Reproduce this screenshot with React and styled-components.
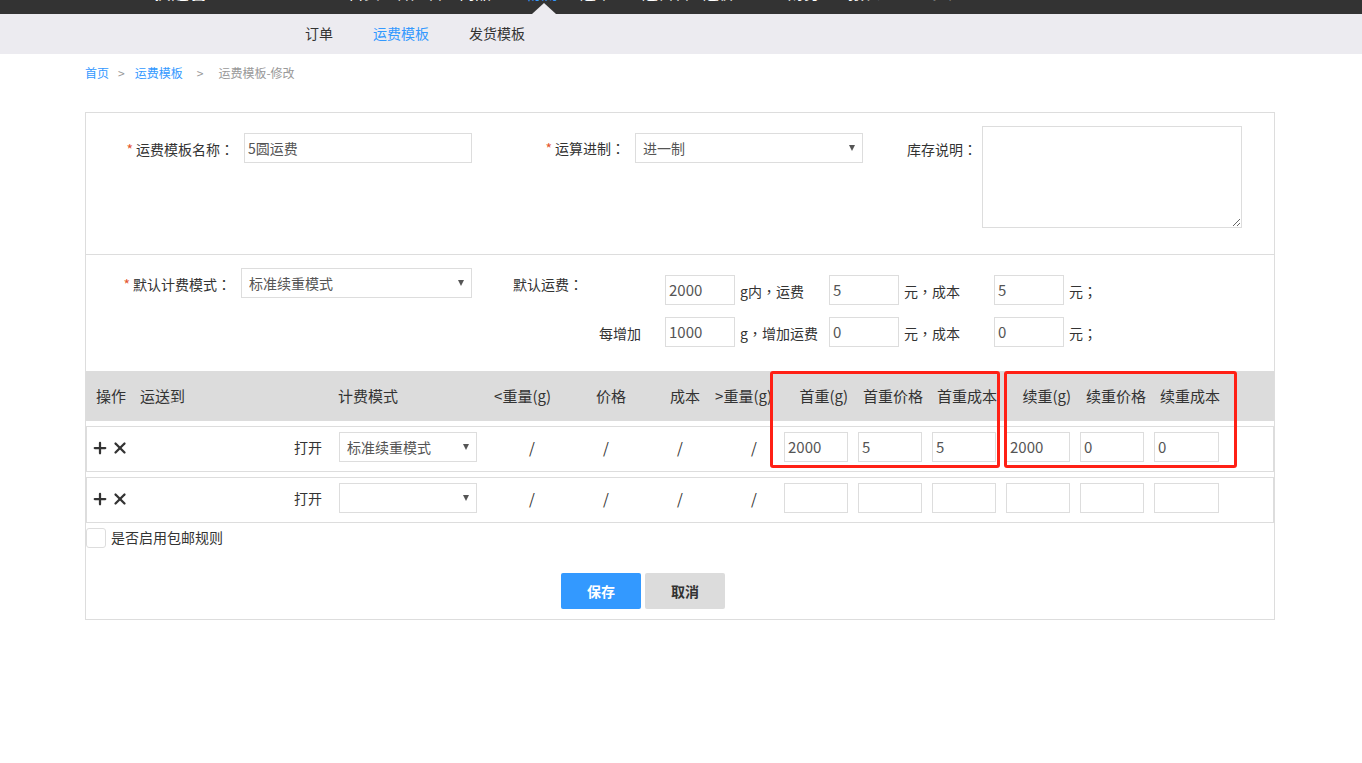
import React from 'react';
import styled, { createGlobalStyle } from 'styled-components';
import { Plus, X } from 'lucide-react';

const FONT = '"Noto Sans CJK SC", "Noto Sans", sans-serif';
const BORDER = '#dddddd';
const BLUE = '#3399ff';
const COLUMNS = '198px 150px repeat(10, 74px) 1fr';

const GlobalStyle = createGlobalStyle`
    html, body {
        margin: 0;
        padding: 0;
        background: #fff;
    }
    body {
        font-family: ${FONT};
        font-size: 14px;
        color: #333;
    }
    * {
        box-sizing: border-box;
    }
`;

const TopBar = styled.div`
    position: relative;
    display: flex;
    height: 14px;
    overflow: hidden;
    background: #333333;
`;

const Logo = styled.div`
    flex: 0 0 auto;
    width: 72px;
    margin-top: -23px;
    margin-left: 153px;
    font-size: 18px;
    line-height: 28px;
    font-weight: 700;
    white-space: nowrap;
    color: #fff;
`;

const TopNav = styled.div`
    display: flex;
    margin-top: -20px;
    margin-left: 123px;
`;

const TopItem = styled.div`
    width: ${props => props.$width}px;
    font-size: 16px;
    line-height: 24px;
    white-space: nowrap;
    color: ${props => (props.$active ? BLUE : '#fff')};
`;

const Caret = styled.div`
    position: absolute;
    left: 532px;
    bottom: 0;
    width: 0;
    height: 0;
    border-left: 12px solid transparent;
    border-right: 12px solid transparent;
    border-bottom: 11px solid #ecebf0;
`;

const SubNav = styled.div`
    display: flex;
    height: 40px;
    align-items: center;
    gap: 40px;
    padding: 0 0 2px 305px;
    background: #ecebf0;
`;

const SubItem = styled.div`
    font-size: 14px;
    color: ${props => (props.$active ? BLUE : '#333')};
`;

const Breadcrumb = styled.div`
    display: flex;
    height: 58px;
    padding: 10px 0 0 85px;
    font-size: 12px;
    line-height: 17px;
    color: #999;
`;

const Crumb = styled.span`
    color: ${props => (props.$link ? BLUE : '#999')};
`;

const Sep = styled.span`
    margin: 0 ${props => props.$right}px 0 ${props => props.$left}px;
    color: #999;
`;

const Card = styled.div`
    width: 1190px;
    height: 508px;
    margin-left: 85px;
    border: 1px solid ${BORDER};
`;

const TopSection = styled.div`
    display: flex;
    align-items: flex-start;
    height: 142px;
    padding-top: 13px;
    border-bottom: 1px solid ${BORDER};
`;

const MidSection = styled.div`
    display: flex;
    align-items: flex-start;
    height: 116px;
    padding-top: 13px;
`;

const Label = styled.div`
    flex: 0 0 auto;
    width: ${props => props.$width}px;
    margin-top: ${props => props.$top}px;
    margin-right: ${props => props.$gap}px;
    line-height: 20px;
    text-align: right;
    white-space: nowrap;
    color: #333;
`;

const Star = styled.span`
    margin-right: 3px;
    color: #e4572e;
`;

/* the traditional cut centres its punctuation in the box, as the screenshot does */
const Punct = styled.span`
    font-family: "Noto Sans CJK TC", sans-serif;
`;

const Input = styled.input`
    display: block;
    width: ${props => props.$width}px;
    height: 30px;
    margin-top: ${props => props.$top || 0}px;
    padding: 0 3px ${props => (props.$digits ? 2 : 0)}px;
    border: 1px solid ${BORDER};
    border-radius: 0;
    outline: none;
    background: #fff;
    font-family: ${FONT};
    font-size: ${props => (props.$digits ? 15 : 14)}px;
    color: #555;
`;

const TextArea = styled.textarea`
    display: block;
    flex: 0 0 auto;
    width: 260px;
    height: 102px;
    padding: 3px;
    border: 1px solid ${BORDER};
    border-radius: 0;
    outline: none;
    background: #fff;
`;

const SelectWrap = styled.div`
    position: relative;
    flex: 0 0 auto;
    width: ${props => props.$width}px;
    height: 30px;
    margin-top: ${props => props.$top || 0}px;
    margin-left: ${props => props.$left || 0}px;

    &::after {
        content: '';
        position: absolute;
        right: 8px;
        top: 12px;
        border-left: 3px solid transparent;
        border-right: 3px solid transparent;
        border-top: 6px solid #555;
        pointer-events: none;
    }
`;

const Select = styled.select`
    display: block;
    width: 100%;
    height: 100%;
    padding: 0 ${props => props.$pad}px;
    border: 1px solid ${BORDER};
    border-radius: 0;
    outline: none;
    background: #fff;
    appearance: none;
    font-family: ${FONT};
    font-size: 14px;
    color: #555;
`;

const FeeGrid = styled.div`
    display: grid;
    grid-template-columns: 151px 70px 94px 70px 95px 70px auto;
    row-gap: 12px;
    margin-left: 42px;
    padding-top: 7px;
    align-items: center;
`;

const FeeTitle = styled.div`
    align-self: start;
    margin: -1px 0 0 -1px;
    line-height: 20px;
    color: #333;
`;

const FeeStep = styled.div`
    padding: 2px 24px 0 0;
    text-align: right;
    font-size: 14px;
    color: #333;
`;

const Unit = styled.div`
    padding: 1px 0 0 5px;
    white-space: nowrap;
    color: #333;
`;

const TableWrap = styled.div`
    position: relative;
`;

const HeadRow = styled.div`
    display: grid;
    grid-template-columns: 54px ${COLUMNS};
    height: 50px;
    align-items: center;
    padding-bottom: 2px;
    background: #dcdcdc;
    font-size: 15px;
    color: #333;
`;

const HeadCell = styled.div`
    padding-left: ${props => props.$padLeft || 0}px;
    padding-right: ${props => props.$padRight || 0}px;
    text-align: ${props => (props.$right ? 'right' : 'left')};
    white-space: nowrap;
`;

const Row = styled.div`
    display: grid;
    grid-template-columns: 53px ${COLUMNS};
    height: 46px;
    margin-top: 5px;
    padding: 5px 0 9px;
    align-items: center;
    border: 1px solid ${BORDER};
`;

const Actions = styled.div`
    display: flex;
    align-items: center;
    gap: 2px;
    padding: 2px 0 0 4px;
    color: #333;
`;

const OpenLink = styled.div`
    padding-right: 16px;
    text-align: right;
    color: #333;
`;

const Slash = styled.div`
    padding-left: 41px;
    font-size: 15px;
    color: #333;
`;

const CheckRow = styled.div`
    display: flex;
    align-items: flex-start;
    gap: 5px;
    margin-top: 5px;
    height: 20px;
    color: #333;
`;

const CheckBox = styled.div`
    width: 20px;
    height: 20px;
    border: 1px solid ${BORDER};
    border-radius: 3px;
    background: #fff;
`;

const CheckText = styled.span`
    line-height: 18px;
`;

const Buttons = styled.div`
    display: flex;
    gap: 4px;
    margin-top: 25px;
    padding-left: 475px;
`;

const Button = styled.button`
    width: 80px;
    height: 36px;
    padding: 0;
    border: 0;
    border-radius: 2px;
    background: ${props => (props.$primary ? BLUE : '#dcdcdc')};
    font-family: ${FONT};
    font-size: 14px;
    font-weight: 700;
    color: ${props => (props.$primary ? '#fff' : '#333')};
`;

const Highlight = styled.div`
    position: absolute;
    top: 0;
    left: ${props => props.$left}px;
    width: ${props => props.$width}px;
    height: 97px;
    border: 3px solid #ff2015;
    border-radius: 3px;
    pointer-events: none;
`;

const topItems = [
    { name: '首页', width: 47 },
    { name: '客户管理', width: 64 },
    { name: '商品', width: 66 },
    { name: '物流', width: 55, active: true },
    { name: '运单', width: 62 },
    { name: '运营管理', width: 61 },
    { name: '运价', width: 85 },
    { name: '财务', width: 60 },
    { name: '报表', width: 80 },
    { name: '系统', width: 60 }
];

const headCells = [
    { name: '操作', padLeft: 10 },
    { name: '运送到' },
    { name: '计费模式' },
    { name: '<重量(g)', right: true, padRight: 11 },
    { name: '价格', right: true, padRight: 10 },
    { name: '成本', right: true, padRight: 10 },
    { name: '>重量(g)', right: true, padRight: 12 },
    { name: '首重(g)', right: true, padRight: 10 },
    { name: '首重价格', right: true, padRight: 9 },
    { name: '首重成本', right: true, padRight: 9 },
    { name: '续重(g)', right: true, padRight: 9 },
    { name: '续重价格', right: true, padRight: 8 },
    { name: '续重成本', right: true, padRight: 8 }
];

const rows = [
    { mode: '标准续重模式', values: ['2000', '5', '5', '2000', '0', '0'] },
    { mode: '', values: ['', '', '', '', '', ''] }
];

const TableRow = ({ mode, values }) => (
    <Row>
        <Actions>
            <Plus size={18} strokeWidth={3} color="#333" />
            <X size={18} strokeWidth={3} color="#333" />
        </Actions>
        <OpenLink>打开</OpenLink>
        <SelectWrap $width={138} $left={1}>
            <Select $pad={7} defaultValue={mode}>
                <option value={mode}>{mode}</option>
            </Select>
        </SelectWrap>
        <Slash>/</Slash>
        <Slash>/</Slash>
        <Slash>/</Slash>
        <Slash>/</Slash>
        {values.map((value, index) => (
            <Input key={index} $digits $width={index === 5 ? 65 : 64} defaultValue={value} />
        ))}
    </Row>
);

const App = () => (
    <>
        <GlobalStyle />
        <TopBar>
            <Logo>快递管理</Logo>
            <TopNav>
                {topItems.map(({ name, width, active }) => (
                    <TopItem key={name} $width={width} $active={active}>{name}</TopItem>
                ))}
            </TopNav>
            <Caret />
        </TopBar>
        <SubNav>
            <SubItem>订单</SubItem>
            <SubItem $active>运费模板</SubItem>
            <SubItem>发货模板</SubItem>
        </SubNav>
        <Breadcrumb>
            <Crumb $link>首页</Crumb>
            <Sep $left={9} $right={10}>&gt;</Sep>
            <Crumb $link>运费模板</Crumb>
            <Sep $left={14} $right={15}>&gt;</Sep>
            <Crumb>运费模板-修改</Crumb>
        </Breadcrumb>
        <Card>
            <TopSection>
                <Label $width={148} $gap={10} $top={13}><Star>*</Star>运费模板名称<Punct>：</Punct></Label>
                <Input $width={228} $top={7} defaultValue="5圆运费" />
                <Label $width={153} $gap={10} $top={12}><Star>*</Star>运算进制<Punct>：</Punct></Label>
                <SelectWrap $width={228} $top={7}>
                    <Select $pad={7} defaultValue="进一制">
                        <option>进一制</option>
                    </Select>
                </SelectWrap>
                <Label $width={114} $gap={5} $top={13}>库存说明<Punct>：</Punct></Label>
                <TextArea />
            </TopSection>
            <MidSection>
                <Label $width={145} $gap={10} $top={6}><Star>*</Star>默认计费模式<Punct>：</Punct></Label>
                <SelectWrap $width={231}>
                    <Select $pad={7} defaultValue="标准续重模式">
                        <option>标准续重模式</option>
                    </Select>
                </SelectWrap>
                <FeeGrid>
                    <FeeTitle>默认运费<Punct>：</Punct></FeeTitle>
                    <Input $digits $width={70} defaultValue="2000" />
                    <Unit>g内<Punct>，</Punct>运费</Unit>
                    <Input $digits $width={70} defaultValue="5" />
                    <Unit>元<Punct>，</Punct>成本</Unit>
                    <Input $digits $width={70} defaultValue="5" />
                    <Unit>元<Punct>；</Punct></Unit>
                    <FeeStep>每增加</FeeStep>
                    <Input $digits $width={70} defaultValue="1000" />
                    <Unit>g<Punct>，</Punct>增加运费</Unit>
                    <Input $digits $width={70} defaultValue="0" />
                    <Unit>元<Punct>，</Punct>成本</Unit>
                    <Input $digits $width={70} defaultValue="0" />
                    <Unit>元<Punct>；</Punct></Unit>
                </FeeGrid>
            </MidSection>
            <TableWrap>
                <HeadRow>
                    {headCells.map(({ name, padLeft, padRight, right }) => (
                        <HeadCell key={name} $padLeft={padLeft} $padRight={padRight} $right={right}>{name}</HeadCell>
                    ))}
                    <span />
                </HeadRow>
                {rows.map((row, index) => (
                    <TableRow key={index} {...row} />
                ))}
                <Highlight $left={684} $width={230} />
                <Highlight $left={918} $width={233} />
            </TableWrap>
            <CheckRow>
                <CheckBox />
                <CheckText>是否启用包邮规则</CheckText>
            </CheckRow>
            <Buttons>
                <Button $primary>保存</Button>
                <Button>取消</Button>
            </Buttons>
        </Card>
    </>
);

export default App;
